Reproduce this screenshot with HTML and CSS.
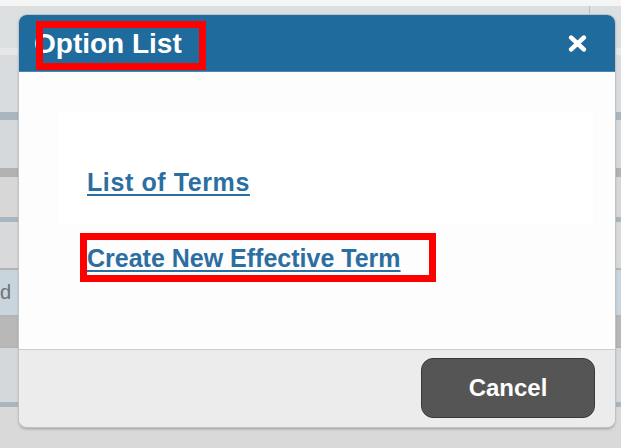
FILE: index.html
```html
<!DOCTYPE html>
<html lang="en">
<head>
<meta charset="utf-8">
<title>Option List</title>
<link rel="stylesheet" href="styles.css">
</head>
<body>
  <!-- page content dimmed behind the modal -->
  <div class="page">
    <div class="band band-top"></div>
    <div class="band band-a"><span class="tick"></span></div>
    <div class="band band-light"></div>
    <div class="band band-a2"></div>
    <div class="band band-rule-blue"></div>
    <div class="band band-b"></div>
    <div class="band band-rule-grey"></div>
    <div class="band band-c"></div>
    <div class="band band-rule-blue small"></div>
    <div class="band band-d"></div>
    <div class="band band-line"></div>
    <div class="band band-sel"><span class="cell-text">d</span></div>
    <div class="band band-line"></div>
    <div class="band band-dark"></div>
    <div class="band band-line"></div>
    <div class="band band-e"></div>
    <div class="band band-rule-blue small"></div>
    <div class="band band-bottom"></div>
  </div>

  <div class="dialog" role="dialog" aria-labelledby="dlg-title">
    <div class="dialog-head">
      <h1 class="dialog-title" id="dlg-title">Option List</h1>
      <button class="dialog-close" type="button" aria-label="Close">
        <svg width="19" height="17" viewBox="0 0 19 17" aria-hidden="true">
          <path d="M3.2 2.6 L15.8 14.4 M15.8 2.6 L3.2 14.4" stroke="#fff" stroke-width="4.6" stroke-linecap="round" fill="none"/>
        </svg>
      </button>
    </div>
    <div class="dialog-body">
      <div class="option-panel">
        <a class="option-link" href="#">List of Terms</a>
        <a class="option-link" href="#">Create New Effective Term</a>
      </div>
    </div>
    <div class="dialog-foot">
      <button class="btn-cancel" type="button">Cancel</button>
    </div>
  </div>

  <!-- highlight frames -->
  <div class="mark mark-title"></div>
  <div class="mark mark-create"></div>
</body>
</html>
```

FILE: styles.css
```css
* {
  box-sizing: border-box;
}

html, body {
  margin: 0;
  padding: 0;
}

body {
  width: 621px;
  height: 448px;
  overflow: hidden;
  position: relative;
  background: #d9d9d9;
  font-family: "Liberation Sans", Arial, sans-serif;
}

/* ---- background page ---- */
.page {
  display: flex;
  flex-direction: column;
  height: 448px;
}

.band {
  position: relative;
  flex: none;
  width: 100%;
}

.band-top { height: 6px; background: #f4f5f5; }
.band-a { height: 42px; background: #dcdfe0; }
.band-light { height: 7px; background: #e6e7e8; }
.band-a2 { height: 57px; background: #d9dcdf; }
.band-rule-blue { height: 8px; background: #a9b6c0; }
.band-rule-blue.small { height: 5px; }
.band-b { height: 48px; background: #d6d9dc; }
.band-rule-grey { height: 9px; background: #b1b1b1; }
.band-c { height: 40px; background: #d7d7d7; }
.band-d { height: 46px; background: #d8d9da; }
.band-line { height: 2px; background: #b4b4b4; }
.band-sel { height: 45px; background: #c9d5dd; }
.band-dark { height: 29px; background: #b8b8b8; }
.band-e { height: 54px; background: #d5d8db; }
.band-bottom { flex: 1; background: #d9d9d9; }

.tick {
  position: absolute;
  left: 589px;
  top: 0;
  width: 1px;
  height: 100%;
  background: #b9bcbf;
}

.cell-text {
  position: absolute;
  left: 0;
  top: 11px;
  font-size: 20px;
  color: #6d7378;
}

/* ---- modal ---- */
.dialog {
  position: absolute;
  left: 19px;
  top: 15px;
  width: 596px;
  height: 412px;
  display: flex;
  flex-direction: column;
  border-radius: 8px;
  background: #ececec;
  box-shadow: 0 0 0 1px #c2c2c2, 0 2px 3px rgba(0, 0, 0, 0.28);
  overflow: hidden;
}

.dialog-head {
  flex: none;
  height: 57px;
  display: flex;
  align-items: center;
  justify-content: space-between;
  padding: 0 28px 0 15px;
  background: #1f6b9d;
  border-bottom: 1px solid #4c86ad;
}

.dialog-title {
  margin: 0;
  padding-top: 1px;
  font-size: 28px;
  font-weight: bold;
  color: #ffffff;
  line-height: 1;
}

.dialog-close {
  display: flex;
  padding: 0;
  margin: 0;
  border: 0;
  background: none;
  cursor: pointer;
}

.dialog-body {
  flex: none;
  height: 277px;
  background: #fdfdfd;
  padding: 40px 22px 0 39px;
}

.option-panel {
  height: 113px;
  background: #ffffff;
  display: flex;
  flex-direction: column;
  align-items: flex-start;
  padding: 58px 0 0 29px;
  gap: 51px;
}

.option-link {
  font-size: 25px;
  line-height: 25px;
  font-weight: bold;
  color: #2b6ea2;
  text-decoration: underline;
  text-decoration-thickness: 2px;
  text-underline-offset: 3px;
  white-space: nowrap;
}

.option-link:first-child {
  letter-spacing: 0.6px;
}

.dialog-foot {
  flex: 1;
  display: flex;
  justify-content: flex-end;
  align-items: flex-start;
  padding: 8px 20px 0 0;
  background: #ececec;
  border-top: 1px solid #cdcdcd;
}

.btn-cancel {
  width: 174px;
  height: 60px;
  border-radius: 12px;
  border: 1px solid #3a3a3a;
  background: #555555;
  color: #ffffff;
  font-family: "Liberation Sans", Arial, sans-serif;
  font-size: 24px;
  font-weight: bold;
  cursor: pointer;
}

/* ---- red highlight frames ---- */
.mark {
  position: absolute;
  border: 7px solid #ff0000;
}

.mark-title {
  left: 36px;
  top: 21px;
  width: 170px;
  height: 49px;
}

.mark-create {
  left: 80px;
  top: 233px;
  width: 356px;
  height: 49px;
}
```
